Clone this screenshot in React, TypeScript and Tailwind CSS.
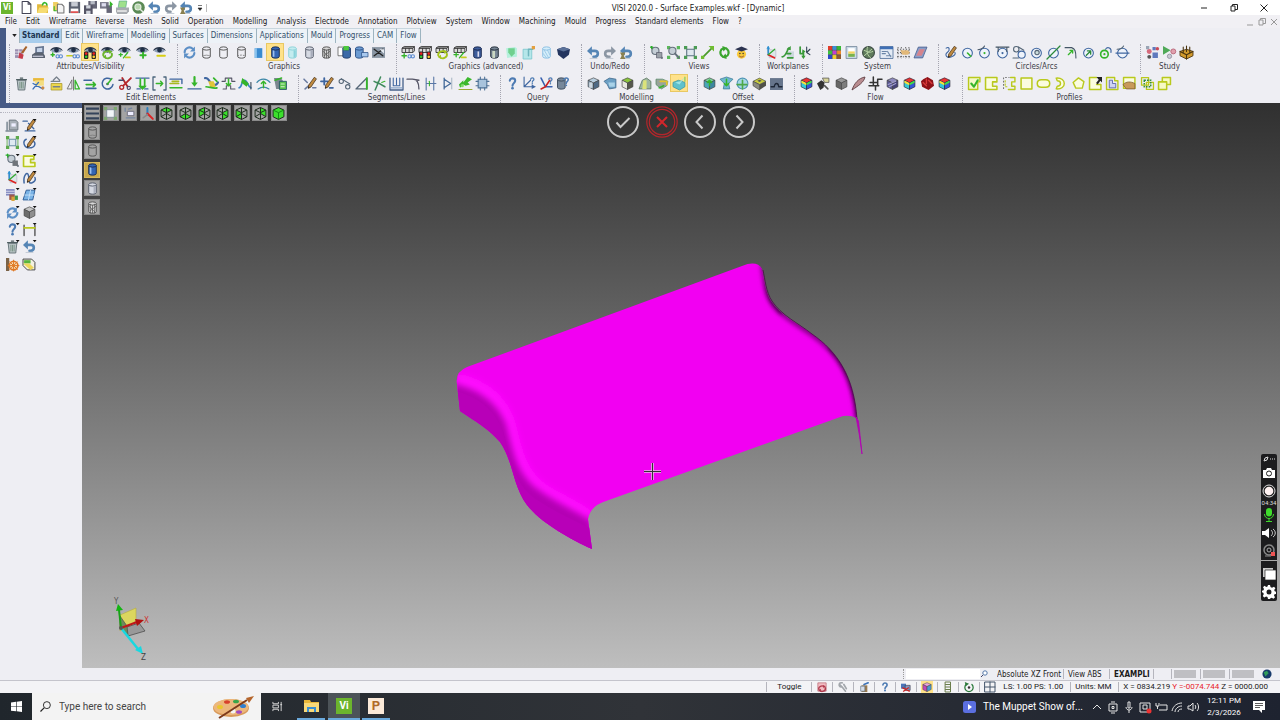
import { ReactNode } from "react";
import clsx from "clsx";

const BLUE = "#3f66a0";
const GREEN = "#35b52a";
const LIME = "#b9c91d";

// stroked path
const P = ({ d, c = BLUE, w = 1, f = "none" }: { d: string; c?: string; w?: number; f?: string }) => (
  <path d={d} stroke={c} strokeWidth={w} fill={f} strokeLinecap="round" strokeLinejoin="round" />
);

const Cyl = ({ f = "none", s = "#555", x = 0 }: { f?: string; s?: string; x?: number }) => (
  <g transform={`translate(${x} 0)`} stroke={s} fill={f} strokeWidth=".9">
    <path d="M2.5 2.3v7.4c0 2 7 2 7 0V2.3" />
    <ellipse cx="6" cy="2.3" rx="3.5" ry="1.5" />
  </g>
);

const Eye = () => (
  <>
    <path d="M0 4.500C1 .5 9 -1 12 4.500 9 2.800 3 2.800 0 4.500z" fill="#2f3b4d" />
    <path d="M1 4.500c2-3 8-3 10 0-2 2.200-8 2.200-10 0z" fill="#8c9db5" />
    <circle cx="6" cy="3.800" r="2.200" fill="#1e2e45" />
  </>
);

const Cubes = () => (
  <>
    <path d="M0 2l2-1.500h9.500L10 2zM0 2h10v4H0z" fill="#d9d9d9" stroke="#333" strokeWidth=".8" />
    <path d="M3.300 2v4M6.600 2v4M11.500.5v4L10 6" fill="none" stroke="#333" strokeWidth=".8" />
  </>
);

const Cube = ({ t, l, r, s = "#444" }: { t: string; l: string; r: string; s?: string }) => (
  <g stroke={s} strokeWidth=".6" strokeLinejoin="round">
    <path d="M6 .8l5 2.200-5 2.500-5-2.500z" fill={t} />
    <path d="M1 3l5 2.500v6L1 9z" fill={l} />
    <path d="M11 3L6 5.500v6L11 9z" fill={r} />
  </g>
);

const Pencil = ({ c = "#c08a3e" }: { c?: string }) => (
  <>
    <path d="M9.500 .3l2 1.400-5 7.500L4 10.500l.3-3z" fill={c} stroke="#4a3520" strokeWidth=".7" />
    <path d="M4 10.500l.2-1.500 1 .7z" fill="#111" />
  </>
);

const Drop = () => <path d="M9 0h3.500l-1.700 2z" fill="#111" />;

const Lights = () => (
  <>
    <rect x="0" y="5" width="4" height="7" rx="1" fill="#222" />
    <rect x="7" y="5" width="4" height="7" rx="1" fill="#222" />
    <circle cx="2" cy="7" r="1.200" fill="#e22" />
    <circle cx="9" cy="7" r="1.200" fill="#e22" />
    <circle cx="2" cy="10" r="1.200" fill="#3c3" />
    <circle cx="9" cy="10" r="1.200" fill="#fc3" />
  </>
);

const Rot = ({ c = "#6cb52d" }: { c?: string }) => (
  <>
    <P d="M2 8.500a4 3.500 0 0 1 6.500-3M10 7a4 3.500 0 0 1-7 3" c={c} w={1.700} />
    <path d="M7 3.500l3.500 1.500-2.500 2.500zM5 12L1.500 10 4.500 8z" fill={c} />
  </>
);

const Undo = ({ c = "#5585b5" }: { c?: string }) => (
  <>
    <P d="M3 4.500h4c4 0 4 5 0 5.500H6" c={c} w={2.400} />
    <path d="M0 4.500L4.500.3v8.400z" fill={c} />
    <ellipse cx="6" cy="11.500" rx="4" ry=".6" fill="#c5ccd6" />
  </>
);

const Lens = () => (
  <>
    <circle cx="5" cy="4.500" r="3.300" fill="#c5ced6" stroke="#65707c" />
    <P d="M7.500 7l3.500 4" c="#65707c" w={1.800} />
  </>
);

const Axes = () => (
  <>
    <path d="M2 3l8 1v6l-6 1z" fill="#dde6ea" stroke="#aab" strokeWidth=".5" />
    <P d="M3 8V1" c="#2d8fd0" w={1.500} />
    <P d="M3 8l6 3" c="#d22" w={1.500} />
    <P d="M3 8l6-5" c="#3a3" w={1.200} />
    <path d="M1.300 2.500L3 0l1.700 2.500z" fill="#2d8fd0" />
  </>
);

const Question = () => (
  <>
    <P d="M3.500 3.500c0-3 5-3 5 0C8.500 5.500 6 5.500 6 8" c="#4d7bb3" w={1.900} />
    <circle cx="6" cy="10.300" r="1.200" fill="#4d7bb3" />
  </>
);

const Chain = ({ x = 0, y = 0 }: { x?: number; y?: number }) => (
  <g transform={`translate(${x} ${y})`} fill="none" stroke="#5b8bd0">
    <circle cx="2" cy="2" r="1.500" />
    <circle cx="5" cy="2" r="1.500" />
  </g>
);

const Trash = () => (
  <>
    <path d="M2 3h8l-1 9H3z" fill="#b9c4c6" stroke="#5d6c70" strokeWidth=".8" />
    <path d="M1 2.500h10M4.500 1h3" stroke="#4f5e62" strokeWidth="1.200" />
    <path d="M4.500 4.500v6M6 4.500v6M7.500 4.500v6" stroke="#6c8a78" strokeWidth=".7" />
  </>
);

// cube outline with some faces lit; faces are given as path data
const WireCube = ({ lit, solid }: { lit: string; solid?: boolean }) => (
  <g stroke="#1c2a1c" strokeWidth=".9" strokeLinejoin="round" fill="none">
    <path d={lit} fill="#3be02c" stroke="none" />
    <path d="M6 .5l5 2.300v6.200l-5 2.500L1 9V2.800z" />
    <path d="M1 2.800l5 2.400 5-2.400M6 5.200v6.300" stroke={solid ? "#148a14" : "#1c2a1c"} />
    {!solid && <path d="M6 .5V6L1 9M6 6l5 3" />}
  </g>
);

const Rainbow = () => (
  <>
    <Cube t="#e33" l="#35c9d8" r="#3556d8" s="#223" />
    <path d="M1.300 3.300l4.500 2.200v2L1.300 5.300z" fill="#fd3" />
    <path d="M10.700 3.300L6.200 5.500v2l4.500-2.200z" fill="#4d4" />
  </>
);

const Ring = ({ children }: { children?: ReactNode }) => (
  <>
    <circle cx="6" cy="6.500" r="4.500" fill="#eef3fb" stroke={BLUE} />
    {children}
  </>
);

const icons: Record<string, ReactNode> = {
  new: <P d="M2 .5h5.500L10 3v8.500H2zM7.500.5V3H10" c="#445" f="#fff" />,
  open: (
    <>
      <path d="M1 3h4l1 1h5v7H1z" fill="#e2b93b" />
      <path d="M3 6h9l-2.500 5H1z" fill="#f6dc72" />
      <P d="M6 3.500c1-3 4-2 4 0" c={GREEN} w={1.600} />
    </>
  ),
  recent: (
    <>
      <path d="M1 1h4l1 1v7H1z" fill="#f0cf62" />
      <P d="M5 3h4l2 2v6H5z" c="#777" f="#f4f4f4" />
      <P d="M2 5v4h2" c={GREEN} />
    </>
  ),
  save: (
    <>
      <path d="M.8.8h10.400v10.400H.8z" fill="#5c6270" />
      <path d="M3 1h6v4H3z" fill="#c8ccd4" />
      <path d="M2.500 7h7v4h-7z" fill="#fff" />
      <path d="M2.500 9.500h7v1.500h-7z" fill="#d44" />
    </>
  ),
  saveall: (
    <>
      <path d="M4 0h8v7H4z" fill="#667" />
      <path d="M6 0h4v3H6z" fill="#b8bcc6" />
      <path d="M0 4h8v8H0z" fill="#556" />
      <path d="M2 4h4v3H2zM2 9h4v3H2z" fill="#d0d4dc" />
    </>
  ),
  export: (
    <>
      <path d="M0 1h8v6H0z" fill="#778" />
      <path d="M1.500 2h4v3h-4z" fill="#dde" />
      <path d="M6 4h5v7H6z" fill="#667" />
      <path d="M9 0l3 3-3 3z" fill={GREEN} />
    </>
  ),
  print: (
    <>
      <path d="M3 0h7L9 6H2z" fill="#9fe08b" stroke="#5a8" strokeWidth=".6" />
      <path d="M0 6h12v3.500L10 12H1L0 10z" fill="#a8abb0" />
      <path d="M1 8.500h9v1.500H1z" fill="#e8e8e8" />
    </>
  ),
  preview: (
    <>
      <circle cx="6" cy="6" r="5.800" fill="#5b8a56" />
      <circle cx="5.500" cy="5.500" r="2.800" fill="#b9d8b0" stroke="#e5eee2" />
      <P d="M8 8l2 2" c="#e5eee2" w={1.300} />
    </>
  ),
  undo: <Undo />,
  redo: (
    <g transform="matrix(-1 0 0 1 12 0)">
      <Undo c="#8b96a3" />
    </g>
  ),
  history: (
    <>
      <Undo />
      <path d="M0 6h5L3.500 9 5 12H0l1.500-3z" fill="#8a8050" />
    </>
  ),
  attributes: (
    <>
      <path d="M0 3h7v8H0z" fill="#9a8fb0" />
      <path d="M0 5.500h7M0 8h7M3.500 3v8" stroke="#fff" strokeWidth=".6" />
      <path d="M10 0l1.500 1-4 6-2-1z" fill="#a5622c" />
      <path d="M4 6l4 2-1 4-4-1z" fill="#c63b4a" />
    </>
  ),
  layers: (
    <>
      <path d="M3 1l8-1v7H3z" fill="#62718c" />
      <path d="M4.500 2l5-.5v4h-5z" fill="#c5d3e8" />
      <path d="M0 8l3-2h7l2 3v2H0z" fill="#5a6270" />
      <P d="M1 9.500h9" c="#dde" />
    </>
  ),
  eyelink: (
    <>
      <Eye />
      <P d="M1 8h3M2.500 6.500v3" c={GREEN} w={1.400} />
      <Chain x={5} y={7.500} />
    </>
  ),
  eyeunlink: (
    <>
      <Eye />
      <P d="M0 9h5" c="#c6cc20" w={1.600} />
      <Chain x={5} y={7.500} />
    </>
  ),
  eyelights: (
    <>
      <Eye />
      <Lights />
    </>
  ),
  eyerefresh: (
    <>
      <Eye />
      <Rot />
    </>
  ),
  eyetoggle: (
    <>
      <Eye />
      <P d="M1 8h3M2.500 6.500v3M5 11l4-5" c={GREEN} w={1.200} />
      <P d="M7 10.500h4" c="#c6cc20" w={1.600} />
    </>
  ),
  eyeplus: (
    <>
      <Eye />
      <P d="M4 8.500h5M6.500 6v5" c={GREEN} w={1.700} />
    </>
  ),
  eyeminus: (
    <>
      <Eye />
      <P d="M4 9h7" c="#d8ce15" w={1.800} />
    </>
  ),
  refresh: (
    <>
      <P d="M1.500 6a4.500 4.500 0 0 1 7.500-3.500M10.500 6.500a4.500 4.500 0 0 1-7.500 3" c="#5c8fc6" w={1.900} />
      <path d="M11 .5V5H6.500zM1 11.500V7h4.500z" fill="#5c8fc6" />
    </>
  ),
  cylwire: (
    <>
      <Cyl />
      <P d="M2.500 9.500c1-1.500 6-1.500 7 0" c="#777" w={0.7} />
    </>
  ),
  cylplain: <Cyl />,
  cyldash: (
    <>
      <Cyl />
      <path d="M2.500 9.500c1-1.500 6-1.500 7 0" fill="none" stroke="#777" strokeWidth=".8" strokeDasharray="1.500 1" />
    </>
  ),
  cylflat: (
    <>
      <path d="M2.500 2h7v9h-7z" fill="#3a8bd0" />
      <path d="M2.500 2h2v9h-2z" fill="#8cc4ee" />
    </>
  ),
  cylblue: (
    <>
      <Cyl f="#3566b5" s="#1c2f55" />
      <path d="M3.500 4v6h1.500V4.300z" fill="#9dc0ef" />
    </>
  ),
  cylcyan: (
    <>
      <Cyl f="#c3ecef" s="#8fd3da" />
      <path d="M7 4v7l2-1V4z" fill="#89d2da" />
    </>
  ),
  cylgrey: (
    <>
      <Cyl f="#d5d9e2" s="#575e6c" />
      <path d="M7 4v6.500l2-1V4z" fill="#a8adbb" />
    </>
  ),
  cylhatch: (
    <>
      <Cyl f="#d8d8d8" />
      <P d="M4 3v8M6 4v7M8 3v8M3 5l5 5M9 5L4 9" c="#555" w={0.7} />
    </>
  ),
  cylgreen: (
    <>
      <path d="M0 1h5v8H0z" fill="#fff" stroke="#555" strokeWidth=".7" />
      <Cyl f="#3c6aa8" s="#24406e" x={2} />
      <path d="M5 0h5v4H5z" fill="#4cc93d" />
    </>
  ),
  cylbox: (
    <>
      <Cyl f="#6c9bd2" s="#2d5288" x={-2} />
      <path d="M6 6h6v4H6z" fill="#a8c8ee" stroke="#2d5288" strokeWidth=".7" />
    </>
  ),
  shade: (
    <>
      <path d="M0 1h12v10H0z" fill="#8995a3" />
      <P d="M2 3l8 6M10 3L2 9" c="#222" w={1.200} />
      <path d="M7 3h4v4z" fill="#e8eef5" />
    </>
  ),
  cubelink: (
    <>
      <Cubes />
      <P d="M0 9h4M2 7v4" c={GREEN} w={1.300} />
      <Chain x={5} y={7.500} />
    </>
  ),
  cubelights: (
    <>
      <Cubes />
      <Lights />
    </>
  ),
  cuberefresh: (
    <>
      <Cubes />
      <Rot c="#a3c41c" />
    </>
  ),
  cubetoggle: (
    <>
      <Cubes />
      <P d="M0 8h4M2 6v4M5 11l4-5" c={GREEN} w={1.200} />
      <P d="M7 10.500h4" c="#c6cc20" w={1.600} />
    </>
  ),
  cylnavy: (
    <>
      <Cyl f="#3f5e9c" s="#1b2a50" />
      <path d="M6 5h1.500v5H6z" fill="#dde" />
    </>
  ),
  cyldark: (
    <>
      <Cyl f="#778594" s="#25303d" />
      <path d="M4 4.500h2.500V11H4z" fill="#ccd9c4" />
    </>
  ),
  boxgreen: (
    <>
      <path d="M1 2l8-1 2 1v8l-9 1z" fill="#b5f0dc" />
      <path d="M3 2h6v5l-3 3-3-4z" fill="#6fd08e" />
    </>
  ),
  boxcyan: (
    <>
      <path d="M1 3h8v9H1z" fill="#b5e6e9" stroke="#73c4cb" strokeWidth=".7" />
      <P d="M6 9V3h4" c="#6fb5bd" w={1.400} />
      <path d="M9 0h3v3H9z" fill="#e3a040" />
    </>
  ),
  cylpale: (
    <>
      <Cyl f="#d5eefa" s="#8dbfe2" />
      <P d="M4 4l4 7M7 4l2 4M3 7l3 4" c="#8dbfe2" w={0.7} />
    </>
  ),
  shield: (
    <>
      <path d="M0 3l6-2 6 2-1 5-5 4-5-4z" fill="#24355f" />
      <path d="M0 3l6-2 6 2-6 2z" fill="#5b7199" />
    </>
  ),
  zoomcube: (
    <>
      <Lens />
      <path d="M0 1h3M1.500 0v3" stroke="#2a2" />
      <path d="M6 6h5v5H6z" fill="#9ba1a8" stroke="#556" strokeWidth=".6" />
    </>
  ),
  zoombox: (
    <>
      <path d="M0 0h3v3H0zM9 0h3v3H9zM0 9h3v3H0zM9 9h3v3H9z" fill="#5cb85c" />
      <Lens />
    </>
  ),
  fit: (
    <>
      <path d="M2.500 3h7v6h-7z" fill="#dfe8ef" stroke="#5c7383" />
      <path d="M0 0h3v3H0zM9 0h3v3H9zM0 9h3v3H0zM9 9h3v3H9z" fill="#4b9b55" />
    </>
  ),
  line: (
    <>
      <P d="M2 10l8-8" c="#4a9a2c" w={1.600} />
      <path d="M7 0h5v5zM0 9h3v3H0z" fill="#6fbd30" />
    </>
  ),
  rotate: (
    <>
      <P d="M4 9.500C1 7 2 3 5 2M8 2.500c3 2.500 2 6.500-1 7.500" c="#3aa52e" w={2} />
      <path d="M4 0l4.500 1.500L5 5zM8 12l-4.500-1.500L7 7z" fill="#3aa52e" />
    </>
  ),
  graduate: (
    <>
      <circle cx="6" cy="7.500" r="4.200" fill="#f8c93a" />
      <path d="M0 3l6-2.500L12 3 6 5z" fill="#2c3350" />
      <circle cx="4.500" cy="7" r=".7" fill="#333" />
      <circle cx="7.500" cy="7" r=".7" fill="#333" />
      <P d="M4 9.300c1 1.200 3 1.200 4 0" c="#843" w={0.8} />
    </>
  ),
  axes: <Axes />,
  axesnew: (
    <>
      <path d="M6 5h6v6H6z" fill="#ccd8dd" />
      <P d="M1 10c3 0 4-4 6-8M5 7h4M6 11h5" c="#3a9a3a" w={1.500} />
      <path d="M5 3l4-3v4z" fill="#3a9a3a" />
    </>
  ),
  axesmove: (
    <>
      <P d="M2 1v6h3M5 5v5" c="#3a9a3a" w={1.600} />
      <path d="M4 3l3 2-3 2zM3 9h4l-2 3z" fill="#3a9a3a" />
      <P d="M8 1v5l3-3M8 6l3 2" c="#345" />
    </>
  ),
  colors: (
    <>
      <path d="M0 0h4v4H0z" fill="#e23c2a" />
      <path d="M4 0h4v4H4z" fill="#3a8fd8" />
      <path d="M8 0h4v4H8z" fill="#38b836" />
      <path d="M0 4h4v4H0z" fill="#3cc43c" />
      <path d="M4 4h4v4H4z" fill="#c33cd2" />
      <path d="M8 4h4v4H8z" fill="#ee8a28" />
      <path d="M0 8h4v4H0z" fill="#2b49c8" />
      <path d="M4 8h4v4H4z" fill="#f1cf2a" />
      <path d="M8 8h4v4H8z" fill="#8c5a32" />
      <path d="M0 4h12M0 8h12M4 0v12M8 0v12" stroke="#444" strokeWidth=".5" />
    </>
  ),
  page: (
    <>
      <path d="M1 .5h10v11H1z" fill="#ccdbe8" stroke="#6d7f92" strokeWidth=".7" />
      <path d="M3 2h6v5H3z" fill="#fff" />
      <path d="M3 7h6v3H3z" fill="#79b34d" />
      <path d="M3 5h6v2H3z" fill="#f5d460" />
    </>
  ),
  globe: (
    <>
      <circle cx="6" cy="6" r="5.500" fill="#5f7a5c" stroke="#3d4b45" />
      <P d="M2 4c3 1 4 3 8 1M5 1c-1 4 0 8 3 10M2 9l7-6" c="#b7d3a6" w={0.9} />
    </>
  ),
  dialog: (
    <>
      <path d="M0 .5h12v11H0z" fill="#e4ebf5" stroke="#56749c" strokeWidth=".8" />
      <path d="M0 .5h12V3H0z" fill="#3f6fb5" />
      <P d="M2 5h4M2 7h3M7 5l3 5M6 9h4" c="#6c86a8" />
    </>
  ),
  snap: (
    <>
      <path d="M1 1v11M4 1v11M8 1v11M11 1v11M0 3h12M0 6h12M0 10h12" stroke="#444" strokeWidth=".8" strokeDasharray="1.200 1.500" />
      <path d="M3 4h7l2 2-2 2H5z" fill="#e2b878" />
    </>
  ),
  plane: (
    <>
      <path d="M4 1h8L8 11H0z" fill="#8a9ec8" stroke="#44598a" strokeWidth=".7" />
      <path d="M5 3h5L7 9H2z" fill="#d6848d" />
    </>
  ),
  arcpencil: (
    <>
      <P d="M2 2c3-2 4 2 1 4-3 2 0 6 4 4 3-1 4-3 3-4" />
      <Pencil />
    </>
  ),
  circle1: (
    <Ring>
      <P d="M6 6.500l3 3" c={GREEN} w={1.500} />
    </Ring>
  ),
  circle2: (
    <Ring>
      <P d="M0 3.500C3 3 5 2 6 0" c="#456" />
      <circle cx="6" cy="6.500" r="1" fill={GREEN} />
    </Ring>
  ),
  circle3: (
    <Ring>
      <P d="M0 1h12M2 1v4M10 1v4" c="#456" />
      <circle cx="6" cy="6.500" r="1" fill={BLUE} />
    </Ring>
  ),
  circle4: (
    <>
      <circle cx="3" cy="3" r="2.500" fill="none" stroke="#567" />
      <circle cx="8" cy="8" r="3.300" fill="#eef3fb" stroke={BLUE} />
      <P d="M0 11h5M5 1l5 3" c="#567" />
    </>
  ),
  circle5: (
    <Ring>
      <circle cx="6.500" cy="6" r="2" fill="#cdd" stroke="#567" />
    </Ring>
  ),
  circle6: (
    <Ring>
      <P d="M0 12L12 0" c="#2c8a3a" w={1.200} />
    </Ring>
  ),
  arc: (
    <>
      <P d="M1 1.500h6c3 1 4 3 4 9.500" c="#456" />
      <P d="M4 8l4-4M5.500 4H8v2.500" c={GREEN} w={1.200} />
    </>
  ),
  circle7: (
    <Ring>
      <P d="M4 8.500l3.500-3.500M5 4.500h3v3" c="#2c8a3a" w={1.200} />
    </Ring>
  ),
  circle8: (
    <>
      <circle cx="5" cy="7.500" r="3.500" fill="none" stroke={GREEN} strokeWidth="1.500" />
      <circle cx="5" cy="7.500" r="1" fill={GREEN} />
      <P d="M6 3c2-3 6-1 5 3" />
    </>
  ),
  circle9: (
    <Ring>
      <P d="M0 6.500h12" c={BLUE} w={1.200} />
      <P d="M1 3c3 0 5-1 6-3" c="#567" />
    </Ring>
  ),
  study1: (
    <>
      <circle cx="3" cy="5" r="2.300" fill="#d66a7c" />
      <circle cx="3" cy="10" r="1.800" fill="#555" />
      <path d="M6 1h3v3H6zM6 6h5v5H6z" fill="#5f79bd" />
      <circle cx="10.500" cy="2.500" r="1.600" fill="#c94a58" />
      <path d="M0 0h3v3H0z" fill="#9aa5b5" />
    </>
  ),
  study2: (
    <>
      <path d="M0 0l7 4-7 4z" fill="#4fa958" />
      <circle cx="9.500" cy="5" r="2.300" fill="#e0a0ae" stroke="#b0566a" strokeWidth=".7" />
      <circle cx="6" cy="9.500" r="2" fill="#c9c9d2" stroke="#889" strokeWidth=".7" />
    </>
  ),
  study3: (
    <>
      <path d="M0 5l6-2 6 2v4l-6 3-6-3z" fill="#d19a2c" stroke="#4a3410" strokeWidth=".8" />
      <P d="M0 5l6 3 6-3M6 8v4M3 1v5M6 0v5M9 1v5" c="#4a3410" />
    </>
  ),
  trash: <Trash />,
  editcut: (
    <>
      <path d="M1 1h10v3H1z" fill="#e9b93b" />
      <path d="M3 3h8v5H3z" fill="#f4dd80" />
      <P d="M1 11l5-6M1 6l9 5" c="#3a70b8" w={1.300} />
      <circle cx="10" cy="10" r="1.500" fill="#c84" />
    </>
  ),
  stack: (
    <>
      <path d="M1 6h10v6H1z" fill="#ebd64c" stroke="#a99726" strokeWidth=".7" />
      <P d="M3 9h6M3 3l3-3 3 3M1 4h8" c="#78818c" w={1.200} />
    </>
  ),
  mirror: (
    <>
      <P d="M4.500 3v8H.5zM6 0v12" c="#777" w={0.9} />
      <P d="M7.500 3v8h4z" c={GREEN} w={1.200} />
    </>
  ),
  moveline: (
    <>
      <P d="M0 3h7M2 10.500h9" w={1.400} />
      <P d="M2 7h8M8.500 5l2 2-2 2" c={GREEN} w={1.500} />
    </>
  ),
  spin: (
    <>
      <P d="M9 2a5 5 0 1 0 2 5" w={1.400} />
      <circle cx="6" cy="6.500" r="1.200" fill="#456" />
      <P d="M6 6.500l4-5" c={GREEN} w={1.400} />
    </>
  ),
  cut: (
    <>
      <P d="M3 1l5 8M11 1L4 8" c="#b5272b" w={1.700} />
      <circle cx="2.500" cy="9.500" r="1.800" fill="none" stroke="#b5272b" strokeWidth="1.200" />
      <circle cx="9" cy="10" r="1.500" fill="none" stroke="#446" />
      <P d="M0 3h4" c="#446" w={1.300} />
    </>
  ),
  trim: (
    <>
      <P d="M0 1h12M1 11h3M8 11h3" w={1.300} />
      <P d="M4 2v7M8 2v7" c={GREEN} w={1.600} />
      <path d="M2 8h8L6 12z" fill={GREEN} />
    </>
  ),
  between: (
    <>
      <P d="M2 0H0v12h2M10 0h2v12h-2" c="#4b657c" w={1.200} />
      <P d="M3 6h6M7 4l2 2-2 2" c={GREEN} w={1.300} />
    </>
  ),
  offset: (
    <>
      <P d="M0 2h11v4" c={BLUE} w={1.300} />
      <P d="M0 6h8M2 4h6" c="#a8b820" w={1.500} />
      <P d="M0 10h11" c={GREEN} w={1.400} />
    </>
  ),
  drop: (
    <>
      <P d="M6 0v6" c={GREEN} w={2} />
      <path d="M3 5h6L6 9z" fill={GREEN} />
      <P d="M0 11h12" w={1.300} />
    </>
  ),
  swap: (
    <>
      <P d="M0 1c4-1 4 5 7 6s4 0 5-2" c={BLUE} w={2} />
      <path d="M3 4h5l2 5-5 1z" fill="#e0c63a" />
      <P d="M1 9c3 0 7 2 10 1M8 1l3 3" c={GREEN} w={1.600} />
    </>
  ),
  lift: (
    <>
      <P d="M0 4h3V1h6v3h3M1 11h3V8h4v3h4" c="#556" />
      <P d="M6 2v6M4 6l2 2 2-2" c={GREEN} w={1.400} />
    </>
  ),
  twist: (
    <>
      <P d="M0 10c3 0 2-7 5-7s3 6 6 7" c="#3a83c5" w={1.500} />
      <path d="M3 1l6 5-2 3-5-4z" fill={GREEN} />
      <P d="M11 5v6" c="#345" />
    </>
  ),
  bend: (
    <>
      <P d="M0 5c3-4 9-4 12 0M1 11c3-2 7-2 10 0" c="#3e88a8" w={1.200} />
      <P d="M6 10V4M4 6l2-2 2 2" c={GREEN} w={1.300} />
    </>
  ),
  paste: (
    <>
      <path d="M0 1h6l2 2v8H2z" fill="#7b8790" />
      <path d="M5 4h6.500v7.500H5z" fill="#59c24e" stroke="#256" strokeWidth=".8" />
      <P d="M6.500 6.500h3M6.500 9h3" c="#d5f5cc" />
      <P d="M1 3l6-2" c={GREEN} w={1.400} />
    </>
  ),
  segpencil: (
    <>
      <P d="M0 2l3 3M1 11l9-8M8 10h3" c="#6a7ba0" w={1.400} />
      <Pencil />
    </>
  ),
  segplus: (
    <>
      <P d="M0 4h6M3 1v6M8 10h3" w={1.700} />
      <Pencil />
    </>
  ),
  segtan: (
    <>
      <circle cx="3" cy="4" r="2" fill="none" stroke="#567" />
      <circle cx="9" cy="9" r="2" fill="none" stroke="#567" />
      <P d="M3 1.500l8 5" c="#567" />
    </>
  ),
  segtri: (
    <>
      <P d="M0 11L10 1v10z" c="#567" w={1.200} />
      <P d="M10 1v10" c={GREEN} w={1.700} />
    </>
  ),
  segangle: (
    <>
      <P d="M2 12L7 0M4 5l7 4M1 4l4 2" c="#3f8a5c" w={1.400} />
      <P d="M8 5l3-1" c={GREEN} />
    </>
  ),
  segu: (
    <>
      <P d="M0 1v11h12V1" c="#44608a" w={1.200} />
      <P d="M3 1v7h6V1M6 1v6" c={BLUE} />
      <P d="M1 10h10" c="#8aa6cc" />
    </>
  ),
  segfillet: <P d="M0 2h5c4 0 6 3 6 9M5 2l6 1" c="#556" w={1.200} />,
  segcross: (
    <>
      <P d="M2 1v11M9 0v12M2 6h9" c="#5876a5" />
      <P d="M5 4v4" c={GREEN} />
    </>
  ),
  segplay: (
    <>
      <P d="M2 1v10M2 2l6 4-6 4" c="#446a9a" w={1.200} />
      <P d="M9 1v10" c="#9ab" w={0.8} />
    </>
  ),
  seggreen: (
    <>
      <path d="M0 7l4-4v2l4-5 4 2-4 3 2 2-4 1-2-1-3 3z" fill="#3ab82c" />
      <circle cx="3" cy="8" r="1.500" fill="#7cdc6a" />
      <P d="M0 11.500h12" c="#9a3" />
    </>
  ),
  segbox: (
    <>
      <path d="M2 2h8v8H2z" fill="#a8c3dc" stroke="#4f7296" />
      <P d="M0 4h2M0 8h2M10 4h2M10 8h2M4 0v2M8 0v2M4 10v2M8 10v2" c="#4f7296" />
    </>
  ),
  question: <Question />,
  queryaxis: (
    <>
      <P d="M1 0v9h8M1 9l6-6" />
      <g transform="translate(5 0) scale(.6)">
        <Question />
      </g>
      <path d="M8 7l4 2-4 2z" fill={BLUE} />
    </>
  ),
  queryred: (
    <>
      <P d="M1 1l4 8h6" c="#3a62b0" w={1.500} />
      <P d="M5 9L1 11M5 9l4-6" c="#c22" w={1.500} />
      <g transform="translate(6 0) scale(.6)">
        <Question />
      </g>
    </>
  ),
  querysolid: (
    <>
      <Cyl f="#77889a" s="#3d4c5c" x={-2} />
      <g transform="translate(4 0) scale(.75)">
        <Question />
      </g>
    </>
  ),
  solid1: (
    <>
      <Cube t="#b9cfe0" l="#7f98ad" r="#4f6a85" />
      <path d="M2 5h3v5H2z" fill="#cfd8e0" />
    </>
  ),
  solid2: (
    <>
      <path d="M0 4l5-3 6 1v8l-6 1-2-4z" fill="#6b9fc4" stroke="#3a6488" strokeWidth=".7" />
      <path d="M4 5h6v4H5z" fill="#a9d2e8" />
    </>
  ),
  solid3: <Cube t="#8bc63c" l="#e8e8e0" r="#55584c" />,
  solid4: (
    <>
      <path d="M0 11l3-8 4-2 4 3v7z" fill="#9fb7a0" stroke="#54705a" strokeWidth=".7" />
      <path d="M4 3h3v8H3z" fill="#dbe37a" />
    </>
  ),
  solid5: (
    <>
      <path d="M0 2h6l5 2-1 4-5 3-5-4z" fill="#99a49a" stroke="#586" strokeWidth=".7" />
      <P d="M4 4h6v3" c="#e2c42e" w={1.600} />
      <P d="M3 10l4-2" c={GREEN} w={1.500} />
    </>
  ),
  dynamic: (
    <>
      <path d="M0 5l5-2 6 2v4l-5 3-6-3z" fill="#5fc1cb" stroke="#3a96a5" strokeWidth=".7" />
      <path d="M2 5l4 2 5-7-4 4z" fill="#9be4e6" />
      <P d="M11 0v4" c="#7c5" />
    </>
  ),
  off1: (
    <>
      <Cube t="#7fd0a0" l="#4aa6b8" r="#3d86a0" />
      <P d="M6 8V3M4 5l2-2 2 2" c={GREEN} w={1.400} />
    </>
  ),
  off2: (
    <>
      <path d="M0 2l6-2 6 2-4 4 1 5H3l1-5z" fill="#6fb8d0" stroke="#3a7a98" strokeWidth=".7" />
      <P d="M6 2v6M4 6l2 2 2-2" c={GREEN} w={1.400} />
    </>
  ),
  off3: (
    <>
      <circle cx="6" cy="6" r="5" fill="#a5d8e6" stroke="#4f94b5" />
      <P d="M1 7h9M6 3v8" c="#4ea84a" w={1.500} />
    </>
  ),
  off4: (
    <>
      <path d="M0 4l6-3 6 3-6 3z" fill="#c8cc40" stroke="#444" strokeWidth=".6" />
      <path d="M0 4l6 3v5L0 8z" fill="#8c8c80" stroke="#444" strokeWidth=".6" />
      <path d="M12 4L6 7v5l6-4z" fill="#505048" />
      <path d="M4 3.500L6 2.500l2 1-2 1z" fill="#555" />
    </>
  ),
  off5: (
    <>
      <path d="M0 1h12v11H0z" fill="#66758c" />
      <P d="M1 9h3c0-4 4-4 4 0h3" c="#1e2838" w={1.200} />
    </>
  ),
  rainbow: <Rainbow />,
  paint: (
    <>
      <path d="M0 6l4-3 3 2-1 5-3 2z" fill="#333" />
      <path d="M5 1h6v4H7z" fill="#d8d49a" stroke="#555" strokeWidth=".7" />
      <P d="M7 8l3 3" c="#555" w={1.500} />
    </>
  ),
  cubegrey: <Cube t="#999" l="#666" r="#7d7d7d" />,
  blade: <path d="M0 12C2 6 6 1 12 0 11 5 6 8 0 12z" fill="#b98c90" stroke="#5e3d42" strokeWidth=".8" />,
  nodes: <P d="M4 0v8h5M1 5h7V2h4M6 8v4M0 8h3M8 5v3" c="#333" w={1.400} />,
  cubepurple: (
    <>
      <Cube t="#8e8abf" l="#5a5894" r="#454278" />
      <P d="M2 7l7-3M3 9l6-3" c="#a5a2d0" />
    </>
  ),
  redball: (
    <>
      <path d="M2 2l4-2 5 3 1 5-5 4-6-3-1-5z" fill="#8e1218" />
      <P d="M2 5l3 3M7 3l3 3M5 2v4" c="#d83a3a" w={1.300} />
    </>
  ),
  profok: (
    <>
      <P d="M.5.5H11v4H9v7H.5z" c={LIME} w={1.300} f="#f4f8c8" />
      <P d="M3 6l2.500 3L9 3" c={GREEN} w={1.900} />
    </>
  ),
  prof1: <P d="M.5.5H11v4H7v4h4v3H.5z" c={LIME} w={1.400} f="#fbfcdf" />,
  prof2: (
    <>
      <P d="M7 .5h4v4H8v4h3v3H5" c={LIME} w={1.300} />
      <path d="M.5 11V.5H6" fill="none" stroke="#777" strokeDasharray="1.500 1.500" />
      <path d="M2 3v6h3" fill="none" stroke={LIME} strokeDasharray="2 1" />
    </>
  ),
  rect: <P d="M1 1h10v10H1z" c={LIME} w={1.400} f="#fbfcdf" />,
  ellipse: <P d="M4 2.500h4c5 0 5 7 0 7H4c-5 0-5-7 0-7z" c={LIME} w={1.400} f="#fbfcdf" />,
  crescent: <P d="M2 1c10-1 10 11 0 10l1-2.500c4 0 4-5 0-5z" c={LIME} w={1.300} f="#fbfcdf" />,
  polygon: <P d="M6 .8l5 3.500-1.500 6h-6L1 5z" c={LIME} w={1.300} f="#fbfcdf" />,
  profarrow: (
    <>
      <P d="M7 .5H.5v11H11V7H7" c={LIME} w={1.400} f="#fbfcdf" />
      <path d="M7 0h5v5L10.500 3.500 8 7 6.500 5.500 9 2.500z" fill="#222" />
    </>
  ),
  proffill: (
    <>
      <P d="M.5.5H8v3h3v8H.5z" c={LIME} w={1.300} />
      <path d="M3 3h3v3h3v4H3z" fill="#cfd4f2" stroke="#5560a8" strokeWidth=".8" />
    </>
  ),
  profhand: (
    <>
      <P d="M.5.5H11v10H.5z" c={LIME} w={1.300} f="#fbfcdf" />
      <path d="M0 7c3-3 7-3 11-1v5H3z" fill="#c89a5a" stroke="#7a5a28" strokeWidth=".7" />
    </>
  ),
  profgrid: (
    <>
      <P d="M.5.5H7v7H.5zM5 5h6.500v6.500H5z" c={LIME} w={1.200} />
      <path d="M3 3h6v6H3z" fill="none" stroke="#2a8a3a" strokeWidth="1.300" strokeDasharray="1.500 1" />
    </>
  ),
  profunion: <P d="M4 .5h7.500V7H8v4.500H.5V4.500H4zM4 4.500h4V7" c={LIME} w={1.400} f="#f6f9c4" />,
  camera: (
    <>
      <path d="M3 1h6l2 2v7H3z" fill="#a9b0b8" stroke="#5b646e" strokeWidth=".7" />
      <path d="M5 4h4v3H5z" fill="#eef" />
      <P d="M0 11h10M1 3v7" c="#7b8894" w={1.400} />
    </>
  ),
  fitview: (
    <>
      <path d="M3 3h6v6H3z" fill="#dfeaf2" stroke="#6b90a5" />
      <path d="M0 0h3v3H0zM9 0h3v3H9zM0 9h3v3H0zM9 9h3v3H9z" fill="#5da94c" />
      <P d="M1 3v6M11 3v6" c="#5da94c" w={0.8} />
    </>
  ),
  zoomd: (
    <>
      <Lens />
      <path d="M6 6h5v5H6z" fill="#6f747a" />
      <P d="M0 1h3M1.500 0v3" c="#2a2" />
      <Drop />
    </>
  ),
  segd: (
    <>
      <P d="M0 2h4M5 4l5 5M2 11h9" w={1.200} />
      <Pencil />
      <Drop />
    </>
  ),
  arcd: (
    <>
      <P d="M3 3c-4 2-2 8 3 8s6-4 4-6" w={1.300} />
      <Pencil />
      <Drop />
    </>
  ),
  profd: (
    <>
      <P d="M.5 2H10v3H7v3h4v3.500H.5z" c={LIME} w={1.500} f="#fbfcdf" />
      <Drop />
    </>
  ),
  axesd: (
    <>
      <Axes />
      <Drop />
    </>
  ),
  curved: (
    <>
      <P d="M1 11C0 4 4 0 5 4s0 8 3 7 4-3 3-5" w={1.400} />
      <Pencil />
      <Drop />
    </>
  ),
  attrd: (
    <>
      <path d="M0 1h8v6H0z" fill="#8288c0" />
      <path d="M0 3h8M0 5h8" stroke="#fff" strokeWidth=".6" />
      <path d="M3 6h5v5H3z" fill="#a05a4a" />
      <path d="M8 7h3v4H8z" fill="#3a9a4a" />
      <path d="M5 8h3v4H5z" fill="#d8a23a" />
      <Drop />
    </>
  ),
  surfd: (
    <>
      <path d="M3 2h8L9 11H0z" fill="#79b3e6" stroke="#2f5f98" strokeWidth=".9" />
      <P d="M7 2L5 11M1.500 6.500H10" c="#c8e2f8" w={0.8} />
      <Drop />
    </>
  ),
  refreshd: (
    <>
      <P d="M1.500 6a4.500 4.500 0 0 1 7-3M10.500 6.500a4.500 4.500 0 0 1-7.500 3" c="#5c8fc6" w={2} />
      <path d="M1 12V7h4.500zM10 1v5H5.500z" fill="#5c8fc6" />
      <Drop />
    </>
  ),
  cubed: (
    <>
      <Cube t="#c5c5c5" l="#6e6e6e" r="#8f8f8f" />
      <Drop />
    </>
  ),
  questiond: (
    <>
      <Question />
      <Drop />
    </>
  ),
  dimd: (
    <>
      <P d="M1 2v9.500M11 2v9.500" c="#555" w={1.300} />
      <P d="M1 4.500h10" c={LIME} w={1.600} />
      <Drop />
    </>
  ),
  trashd: (
    <>
      <Trash />
      <Drop />
    </>
  ),
  undod: (
    <>
      <Undo />
      <Drop />
    </>
  ),
  cam: (
    <>
      <path d="M0 0h3v12H0z" fill="#7b6348" />
      <circle cx="7" cy="7" r="4" fill="#f6dcb5" stroke="#df7722" strokeWidth="1.500" />
      <P d="M7 2v10M2 7h10M3.500 3.500l7 7M10.500 3.500l-7 7" c="#df7722" w={0.9} />
    </>
  ),
  image: (
    <>
      <path d="M0 1h8l3 3v7H4L0 7z" fill="#f2f1e0" stroke="#444" strokeWidth=".9" />
      <path d="M1 2h6v3H1z" fill="#58b53c" />
      <path d="M0 5h6l4 4-3 2z" fill="#edd65a" />
    </>
  ),
  menu: <path d="M0 1.500h12M0 6h12M0 10.500h12" stroke="#34435a" strokeWidth="2" />,
  fitgrey: (
    <>
      <path d="M0 0h3v3H0zM9 0h3v3H9zM0 9h3v3H0zM9 9h3v3H9z" fill="#7ca86e" />
      <path d="M2.500 2.500h7v7h-7z" fill="#f2f5f8" stroke="#76868f" strokeWidth=".7" />
    </>
  ),
  snapshot: (
    <>
      <path d="M4 4h6v4H4z" fill="#eef" stroke="#667" strokeWidth=".8" />
      <P d="M3 10h8M2 1v3M5 2l3-1" c="#7485a0" w={1.200} />
    </>
  ),
  axisred: (
    <>
      <P d="M5 7V1" c="#2b80c0" w={1.800} />
      <P d="M5 6l5 5" c="#d22" w={1.800} />
      <P d="M5 7l-4 3" c="#888" w={1.300} />
    </>
  ),
  viewtop: <WireCube lit="M6 .5l5 2.300-5 2.400-5-2.400z" />,
  viewfront: <WireCube lit="M1 9l5-3 5 3-5 2.500z" />,
  viewleft: <WireCube lit="M1 2.800L6 .5V6L1 9z" />,
  viewright: <WireCube lit="M11 2.800L6 5.200v6.300L11 9z" />,
  viewback: <WireCube lit="M1 2.800l5 2.400v6.300L1 9z" />,
  viewbottom: <WireCube lit="M6 .5l5 2.300V9L6 6z" />,
  viewiso: <WireCube lit="M6 .5l5 2.300v6.200l-5 2.500L1 9V2.800z" solid />,
  plug: (
    <>
      <path d="M1 1h10v10H1z" fill="#f2bcc3" stroke="#b5606c" strokeWidth=".8" />
      <Rot c="#b03a4c" />
    </>
  ),
  wrench: <P d="M2 3l3 3 4 5M5 1C1 0 0 5 4 6M7 3l3 5" c="#a2a6ab" w={2} />,
  attach: (
    <>
      <path d="M3 4h7v8H3z" fill="#9a7b50" />
      <path d="M2 5h5v6H2z" fill="#d5dde8" stroke="#567" strokeWidth=".7" />
      <P d="M6 3l5-2" c="#3c72b8" w={2} />
    </>
  ),
  filter: (
    <>
      <path d="M0 2h6v6H0z" fill="#4a74b8" />
      <path d="M5 4h6v6H5z" fill="#8296c0" stroke="#334" strokeWidth=".7" />
      <P d="M2 7l8 4M9 7l-6 4" c="#c22" w={1.500} />
    </>
  ),
  cubepink: <Cube t="#e8a3dc" l="#c348b8" r="#4a9ad0" />,
  ladder: <P d="M3 0h6v12H3zM3 3h6M3 6h6M3 9h6" c="#6a7c4c" w={1.200} />,
  gyro: (
    <>
      <P d="M2.500 3a5 5 0 1 0 7 0" c="#2a7a3a" w={1.500} />
      <path d="M1 0l5 2-4 3z" fill="#2a7a3a" />
      <circle cx="6" cy="6.500" r="1.500" fill="#333" />
    </>
  ),
  grid: <P d="M0 0h12v12H0zM6 0v12M0 6h12" c="#44546a" w={1.200} />,
};

const Icon = ({ name, className = "size-[13px]" }: { name: string; className?: string }) => (
  <svg viewBox="0 0 12 12" className={clsx("block shrink-0 overflow-visible", className)} aria-hidden="true">
    {icons[name]}
  </svg>
);

const Tool = ({ name, active }: { name: string; active?: boolean }) => (
  <button
    aria-label={name}
    className={clsx("flex size-4 items-center justify-center", active && "bg-[#ffe28a] outline outline-[#e9c863]")}
  >
    <Icon name={name} />
  </button>
);

type Group = { label: string; width: string; tools: string[]; active?: string };

const rowOne: Group[] = [
  {
    label: "Attributes/Visibility",
    width: "w-[168px]",
    tools: ["attributes", "layers", "eyelink", "eyeunlink", "eyelights", "eyerefresh", "eyetoggle", "eyeplus", "eyeminus"],
    active: "eyelights",
  },
  {
    label: "Graphics",
    width: "w-[219px]",
    tools: ["refresh", "cylwire", "cylplain", "cyldash", "cylflat", "cylblue", "cylcyan", "cylgrey", "cylhatch", "cylgreen", "cylbox", "shade"],
    active: "cylblue",
  },
  {
    label: "Graphics (advanced)",
    width: "w-[185px]",
    tools: ["cubelink", "cubelights", "cuberefresh", "cubetoggle", "cylnavy", "cyldark", "boxgreen", "boxcyan", "cylpale", "shield"],
  },
  { label: "Undo/Redo", width: "w-[63px]", tools: ["undo", "redo", "history"] },
  { label: "Views", width: "w-[115px]", tools: ["zoomcube", "zoombox", "fit", "line", "rotate", "graduate"] },
  { label: "Workplanes", width: "w-[63px]", tools: ["axes", "axesnew", "axesmove"] },
  { label: "System", width: "w-[116px]", tools: ["colors", "page", "globe", "dialog", "snap", "plane"] },
  {
    label: "Circles/Arcs",
    width: "w-[202px]",
    tools: ["arcpencil", "circle1", "circle2", "circle3", "circle4", "circle5", "circle6", "arc", "circle7", "circle8", "circle9"],
  },
  { label: "Study", width: "w-[64px]", tools: ["study1", "study2", "study3"] },
];

const rowTwo: Group[] = [
  {
    label: "Edit Elements",
    width: "w-[289px]",
    tools: ["trash", "editcut", "stack", "mirror", "moveline", "spin", "cut", "trim", "between", "offset", "drop", "swap", "lift", "twist", "bend", "paste"],
  },
  {
    label: "Segments/Lines",
    width: "w-[202px]",
    tools: ["segpencil", "segplus", "segtan", "segtri", "segangle", "segu", "segfillet", "segcross", "segplay", "seggreen", "segbox"],
  },
  { label: "Query", width: "w-[81px]", tools: ["question", "queryaxis", "queryred", "querysolid"] },
  {
    label: "Modelling",
    width: "w-[116px]",
    tools: ["solid1", "solid2", "solid3", "solid4", "solid5", "dynamic"],
    active: "dynamic",
  },
  { label: "Offset", width: "w-[97px]", tools: ["off1", "off2", "off3", "off4", "off5"] },
  {
    label: "Flow",
    width: "w-[168px]",
    tools: ["rainbow", "paint", "cubegrey", "blade", "nodes", "cubepurple", "rainbow", "redball", "rainbow"],
  },
  {
    label: "Profiles",
    width: "w-[220px]",
    tools: ["profok", "prof1", "prof2", "rect", "ellipse", "crescent", "polygon", "profarrow", "proffill", "profhand", "profgrid", "profunion"],
  },
];

const menus = [
  "File", "Edit", "Wireframe", "Reverse", "Mesh", "Solid", "Operation", "Modelling", "Analysis", "Electrode", "Annotation",
  "Plotview", "System", "Window", "Machining", "Mould", "Progress", "Standard elements", "Flow", "?",
];

const tabs = ["Standard", "Edit", "Wireframe", "Modelling", "Surfaces", "Dimensions", "Applications", "Mould", "Progress", "CAM", "Flow"];

const dock = [
  "camera", "segd", "fitview", "arcd", "zoomd", "profd", "axesd", "curved", "attrd", "surfd", "refreshd", "cubed",
  "questiond", "dimd", "trashd", "undod", "cam", "image",
];

function RibbonRow({ groups }: { groups: Group[] }) {
  return (
    <div className="flex h-[30px]">
      {groups.map((g) => (
        <div
          key={g.label}
          className={clsx("flex shrink-0 flex-col border-l border-dotted border-[#a5a5b0] pl-[3px] pr-[9px]", g.width)}
        >
          <div className="grid auto-cols-fr grid-flow-col justify-items-center">
            {g.tools.map((t, i) => (
              <Tool key={i} name={t} active={g.active === t} />
            ))}
          </div>
          <span className="whitespace-nowrap text-center leading-[14px] text-[#3c3c46]">{g.label}</span>
        </div>
      ))}
    </div>
  );
}

function TitleBar() {
  return (
    <header className="flex h-[15px] items-center bg-white">
      <span className="ml-px flex size-3 items-center justify-center bg-[#6cb52d] font-bold text-white">Vi</span>
      <div className="ml-[5px] flex items-center">
        {["new", "open", "recent", "save", "saveall", "export", "print", "preview", "undo", "redo", "history"].map((n) => (
          <Tool key={n} name={n} />
        ))}
        <button aria-label="customize" className="flex h-4 w-3 items-center justify-center">
          <svg viewBox="0 0 6 6" className="size-[6px]">
            <path d="M1 .5h4M1 3h4L3 5.500z" fill="#222" stroke="#222" strokeWidth=".6" />
          </svg>
        </button>
      </div>
      <span className="h-2 w-px bg-[#bbb]" />
      <h1 className="flex-1 pt-[2px] text-center">VISI 2020.0 - Surface Examples.wkf - [Dynamic]</h1>
      <div className="flex pr-px">
        {["M3 6h6", "M3 4h4v5H3zM4.500 4V2.500h5v5H7", "M2.500 2.500l7 7M9.500 2.500l-7 7"].map((d) => (
          <button key={d} aria-label="window" className="flex w-[30px] justify-center">
            <svg viewBox="0 0 12 12" className="size-3">
              <path d={d} stroke="#222" fill="none" />
            </svg>
          </button>
        ))}
      </div>
    </header>
  );
}

function MenuBar() {
  return (
    <nav className="flex h-[13px] items-end justify-between bg-[#f1f0f4] pl-[5px]">
      <div className="flex gap-[9px]">
        {menus.map((m) => (
          <button key={m} className="whitespace-nowrap">
            {m}
          </button>
        ))}
      </div>
      <div className="flex">
        {["M3 9h6", "M3 4h4v5H3zM4.500 4V2.500h5v5H7", "M3 3l6 6M9 3L3 9"].map((d) => (
          <button key={d} aria-label="document window">
            <svg viewBox="0 0 12 12" className="size-3">
              <path d={d} stroke="#999" fill="none" />
            </svg>
          </button>
        ))}
      </div>
    </nav>
  );
}

function Ribbon() {
  return (
    <div className="bg-[#475a85] pl-[6px]">
      <div className="h-[75px] bg-[#eeeef3] pl-[3px]">
        <div className="flex h-[15px] text-[#33506b]">
          <button aria-label="more tabs" className="flex w-[11px] items-center justify-center border-r border-[#9db4c0] text-black">
            <svg viewBox="0 0 6 4" className="h-[3px] w-[5px]">
              <path d="M0 0h6L3 4z" fill="#222" />
            </svg>
          </button>
          {tabs.map((t, i) => (
            <button
              key={t}
              className={clsx(
                "border-r border-t border-r-[#9db4c0] border-t-[#c8d6de]",
                i === 0 ? "bg-[#a9cdec] px-[2px] font-bold text-[#1d3450]" : "bg-[#edf2f7] pl-[3px] pr-[3px]"
              )}
            >
              {t}
            </button>
          ))}
        </div>
        <div className="flex flex-col gap-px pt-px">
          <RibbonRow groups={rowOne} />
          <RibbonRow groups={rowTwo} />
        </div>
      </div>
    </div>
  );
}

function Dock() {
  return (
    <aside className="w-[82px] shrink-0 border-t-[5px] border-[#475a85] bg-[#eeeef3]">
      <div className="mt-1 border-t border-dotted border-[#b5b5c0]" />
      <div className="ml-1 mt-1 grid h-[156px] w-[34px] grid-cols-2 items-center">
        {dock.map((d) => (
          <Tool key={d} name={d} />
        ))}
      </div>
    </aside>
  );
}

const ViewButton = ({ name, active }: { name: string; active?: boolean }) => (
  <button
    aria-label={name}
    className={clsx(
      "flex size-4 items-center justify-center border",
      active ? "border-[#d8b85a] bg-[#c9a94f]" : "border-[#8a8a8a] bg-[#a3a3a3]"
    )}
  >
    <Icon name={name} />
  </button>
);

function Model() {
  return (
    <svg viewBox="82 103 1198 565" className="absolute inset-0 size-full" aria-label="surface model">
      <defs>
        <filter id="soft" x="-20%" y="-20%" width="140%" height="140%">
          <feGaussianBlur stdDeviation="3" />
        </filter>
        <filter id="tight" x="-20%" y="-20%" width="140%" height="140%">
          <feGaussianBlur stdDeviation="2" />
        </filter>
        <clipPath id="sheet">
          <path d="M467 367L742 266Q757 260 762 269C764 277 765 292 771 301C780 315 797 323 812 334C838 352 854 377 857 419Q853 415 843 416L606 501Q590 506 588 519L592 549C570 539 541 523 527 505C513 487 513 460 500 442C490 430 475 421 460 411L457 384Q455 372 467 367Z" />
        </clipPath>
      </defs>
      <g clipPath="url(#sheet)">
        <rect x="450" y="250" width="420" height="310" fill="#f200f2" />
        <path
          d="M457 381C485 387 502 405 508 425C514 452 520 478 545 493C560 502 574 508 588 518"
          fill="none"
          stroke="#ff0aff"
          strokeWidth="16"
          filter="url(#soft)"
        />
        <path
          d="M450 383C478 388 497 402 506 424C513 450 516 474 539 490C556 502 572 509 590 520L596 560L440 560Z"
          fill="#b400b4"
          filter="url(#soft)"
        />
        <path
          d="M450 389C478 396 494 409 503 431C510 457 513 482 534 498C550 509 570 519 590 528L596 560L440 560Z"
          fill="#b800b8"
        />
        <path
          d="M764 264C766 277 767 292 773 301C782 315 799 323 814 334C840 352 856 377 859 419"
          fill="none"
          stroke="#8a008a"
          strokeWidth="8"
          filter="url(#tight)"
        />
        <path d="M769 280C768 295 774 303 783 312M830 346C850 366 858 392 860 420" fill="none" stroke="#300030" strokeWidth="5" filter="url(#tight)" />
      </g>
      <path
        d="M763 270C765 279 766 292 772 301C781 315 798 323 812 334C838 352 854 377 857 419"
        fill="none"
        stroke="#4a0a4a"
        strokeWidth=".8"
      />
      <path d="M856 417L858.500 421 862 454Q860 436 856 417Z" fill="#b400b4" stroke="#b400b4" strokeWidth=".8" />
      <path d="M652.500 463v17M644 471.500h17" stroke="#e0c0e0" strokeWidth="2.500" />
      <path d="M652.500 463v17M644 471.500h17" stroke="#333" />
    </svg>
  );
}

function Triad() {
  return (
    <svg viewBox="0 0 44 68" className="absolute bottom-[3px] left-[29px] h-[68px] w-[44px] overflow-visible text-[8px]" aria-label="axes">
      <path d="M9 18l16-7v13l-16 10z" fill="#dcd65e" stroke="#b5ad3c" strokeWidth=".6" />
      <path d="M10 32l18-6 6 8-17 5z" fill="#999" stroke="#444" strokeWidth=".7" />
      <path d="M9 19l7 10 1 9-8-7z" fill="#6c8a5c" stroke="#444" strokeWidth=".6" />
      <path d="M10 31L8 13" stroke="#18a018" strokeWidth="2" />
      <path d="M5 14l2-7 5 6z" fill="#12b512" />
      <path d="M10 31l16-6" stroke="#c01818" strokeWidth="2" />
      <path d="M24 22l9 1-7 6z" fill="#b01010" />
      <path d="M10 31l17 21" stroke="#18d8e0" strokeWidth="2.500" />
      <path d="M24 53l6-4 2 8z" fill="#18d8e0" />
      <circle cx="10" cy="31" r="2" fill="#555" />
      <text x="3" y="7" fill="#555">Y</text>
      <text x="33" y="26" fill="#c33">X</text>
      <text x="30" y="63" fill="#444">Z</text>
    </svg>
  );
}

const steps = [
  { label: "accept", d: "M9.500 16.500l4 4.500 9-9" },
  { label: "cancel", d: "M11 11l10 10M21 11L11 21", red: true },
  { label: "previous", d: "M18.500 9.500L12.500 16l6 6.500" },
  { label: "next", d: "M13.500 9.500l6 6.500-6 6.500" },
];

const Glyph = ({ children, label }: { children: ReactNode; label: string }) => (
  <button aria-label={label} className="flex h-[18px] items-center justify-center">
    <svg viewBox="0 0 14 14" className="size-[14px]" fill="#fff">
      {children}
    </svg>
  </button>
);

function Recorder() {
  return (
    <div className="absolute right-[3px] top-[351px] flex w-4 flex-col rounded-xs bg-[#1c1c1e] text-white">
      <div className="flex h-[10px] items-center justify-center gap-px">
        <svg viewBox="0 0 12 6" className="h-[6px] w-3">
          <path d="M1 5l1-3 3-1-1 3z" stroke="#ddd" fill="none" />
          <path d="M7 3h1M9 3h1M11 3h1" stroke="#ddd" />
        </svg>
      </div>
      <Glyph label="screenshot">
        <path d="M1 4h3l1-2h4l1 2h3v8H1z" />
        <circle cx="7" cy="7.500" r="2.500" fill="none" stroke="#222" />
      </Glyph>
      <Glyph label="record">
        <circle cx="7" cy="7" r="6" fill="#222" stroke="#ddd" />
        <circle cx="7" cy="7" r="4.300" fill="#fff2f2" />
      </Glyph>
      <span className="text-center font-[Roboto] text-[6px] leading-[6px] text-[#ddd]">04:34</span>
      <Glyph label="microphone">
        <rect x="4" y="0" width="6" height="8.500" rx="3" fill="#3fdc2c" />
        <path d="M2.500 6c0 6 9 6 9 0M7 10v3M4 13.500h6" stroke="#3fdc2c" fill="none" />
      </Glyph>
      <Glyph label="speaker">
        <path d="M0 5h3l4-3v10L3 9H0z" />
        <path d="M9 4c2 2 2 4 0 6M11 3c3 2 3 6 0 8" stroke="#ccc" fill="none" />
      </Glyph>
      <Glyph label="webcam">
        <circle cx="7" cy="6" r="5" fill="none" stroke="#888" strokeWidth="1.500" />
        <circle cx="7" cy="6" r="2" fill="none" stroke="#aaa" />
        <path d="M3 12h6" stroke="#888" />
        <path d="M9 8h4v4H9z" fill="#e55" />
      </Glyph>
      <hr className="border-[#aaa]" />
      <div className="h-1" />
      <Glyph label="windows">
        <path d="M1 1h10v9H1z" fill="#ccc" />
        <path d="M3 3h11v10H3z" stroke="#222" strokeWidth=".7" />
      </Glyph>
      <Glyph label="settings">
        <path d="M6 0h2l.5 2 1.500.7 2-1 1.400 1.500-1.200 1.800.5 1.300 1.800.5v2l-2 .5-.5 1.200 1 1.800-1.500 1.500-1.800-1-1.300.5L8 14H6l-.5-2-1.400-.6-1.900 1L.8 11l1-1.900-.6-1.300L0 7.300V5.800l1.500-.5.5-1.300-1-1.800L2.500.8l1.800 1.100L5.500 1.500z" />
        <circle cx="7" cy="7" r="2.500" fill="#1c1c1e" />
      </Glyph>
    </div>
  );
}

function Viewport() {
  const top = ["menu", "fitgrey", "snapshot", "axisred", "viewtop", "viewfront", "viewleft", "viewright", "viewback", "viewbottom", "viewiso"];
  const side = ["cylwire", "cylplain", "cylblue", "cylgrey", "cylhatch"];
  return (
    <main className="relative flex-1 bg-linear-to-b from-[#303030] to-[#bebebe]">
      <Model />
      <Triad />
      <div className="absolute left-[2px] top-[2px] flex w-[203px] justify-between">
        {top.map((n) => (
          <ViewButton key={n} name={n} />
        ))}
      </div>
      <div className="absolute left-[2px] top-[21px] flex h-[91px] flex-col justify-between">
        {side.map((n) => (
          <ViewButton key={n} name={n} active={n === "cylblue"} />
        ))}
      </div>
      <div className="relative mx-auto mt-[3px] flex w-[148px] justify-between">
        {steps.map((s) => (
          <button key={s.label} aria-label={s.label}>
            <svg viewBox="0 0 32 32" className="size-8" fill="none">
              {s.red ? (
                <>
                  <circle cx="16" cy="16" r="15.200" stroke="#b3262b" strokeWidth="1.200" />
                  <circle cx="16" cy="16" r="12.700" stroke="#b3262b" strokeWidth="1.200" />
                </>
              ) : (
                <circle cx="16" cy="16" r="15" stroke="#c9c9c9" strokeWidth="2" />
              )}
              <path d={s.d} stroke={s.red ? "#d2262b" : "#c9c9c9"} strokeWidth="2" />
            </svg>
          </button>
        ))}
      </div>
      <Recorder />
    </main>
  );
}

const Sep = () => <span className="h-[10px] w-px shrink-0 bg-[#b5b5bd]" />;

function StatusBars() {
  return (
    <footer className="whitespace-nowrap bg-[#eeeef3]">
      <div className="flex h-[13px] items-center justify-end border-b border-[#c4c4cc] pr-2 leading-[14px]">
        <label className="mr-[9px] flex items-center border-l border-dotted border-[#999] pl-[2px]">
          <input aria-label="command search" className="h-[10px] w-[74px] bg-white" />
          <svg viewBox="0 0 8 8" className="size-2">
            <path d="M1 7l2-2" stroke="#446" />
            <circle cx="5" cy="3" r="2.200" stroke="#57a" fill="#fff" />
          </svg>
        </label>
        <span className="w-[66px] overflow-hidden pt-px">Absolute XZ Front</span>
        <Sep />
        <span className="ml-1 w-[41px] pt-px">View ABS</span>
        <Sep />
        <strong className="ml-1 w-[39px] pt-px">EXAMPLI</strong>
        <Sep />
        <span className="w-[17px]" />
        {[0, 1, 2].map((i) => (
          <span key={i} className="flex w-[29px] items-center gap-[2px]">
            <Sep />
            <span className="h-2 w-[22px] bg-[#bfbfc3]" />
          </span>
        ))}
        <svg viewBox="0 0 12 12" className="ml-1 size-[10px]">
          <circle cx="6" cy="6" r="5.500" fill="#173a6b" />
          <path d="M2 4l4-2 2 3-4 4z" fill="#2f9c5a" />
        </svg>
      </div>
      <div className="flex h-3 items-center justify-end bg-[#f3f3f6] pr-3 font-[Roboto,sans-serif]">
        <Sep />
        <button className="w-[44px]">Toggle</button>
        {["plug", "wrench", "attach", "question", "filter", "cubepink", "ladder", "gyro", "grid"].map((n) => (
          <span key={n} className="flex w-[21px] items-center justify-between">
            <Sep />
            <button aria-label={n} className={clsx("mx-auto p-px", n === "cubepink" && "bg-[#ffe28a]")}>
              <Icon name={n} className="size-[10px]" />
            </button>
          </span>
        ))}
        <span className="ml-[3px] w-[67px]">LS: 1.00 PS: 1.00</span>
        <Sep />
        <span className="ml-1 w-[43px]">Units: MM</span>
        <Sep />
        <span className="ml-1">
          X = 0834.219 <span className="text-[#e8222a]">Y =-0074.744</span> Z = 0000.000
        </span>
      </div>
    </footer>
  );
}

const tray = [
  { label: "show hidden icons", d: "M3 9l4-4 4 4" },
  { label: "meet now", d: "M3 4h8v7H3zM5 2h4M5 13h4M6 6.500h2v2H6z" },
  { label: "microphone in use", d: "M6 2h2v6H6zM4 7c0 4 6 4 6 0M7 10v3" },
  { label: "recorder", d: "M2 3h10v9H2zM5 5h4v4H5z" },
  { label: "battery", d: "M6 5h7v5H5M2 3v3h3V3M3.500 6v3" },
  { label: "wifi", d: "M2 11C3 6 7 3 12 3M5 12c0-3 3-6 7-6M8 12c0-2 2-3 4-3" },
  { label: "volume", d: "M2 6h2l3-3v8L4 9H2zM9 5c1 1 1 3 0 4M11 3c2 2 2 6 0 8" },
];

function Taskbar() {
  return (
    <div className="flex h-[27px] items-center bg-linear-to-r from-[#20262c] via-[#303338] to-[#1e2330] font-[Roboto,sans-serif] text-[10px] text-white">
      <button aria-label="Start" className="flex w-8 justify-center">
        <svg viewBox="0 0 12 12" className="size-[11px]" fill="#fff">
          <path d="M0 1.500L5.500.8v4.900H0zM6.200.7L12 0v5.700H6.200zM0 6.300h5.500v5L0 10.500zM6.200 6.300H12V12l-5.800-.7z" />
        </svg>
      </button>
      <label className="flex h-full w-[229px] items-center bg-[#f3f3f3] pl-2">
        <svg viewBox="0 0 12 12" className="mr-2 size-[11px]" fill="none" stroke="#222">
          <circle cx="7.500" cy="4.500" r="3.800" />
          <path d="M4.500 7.500L.5 11.500" strokeWidth="1.300" />
        </svg>
        <input aria-label="Search" placeholder="Type here to search" className="w-[140px] flex-1 text-[#333] placeholder-[#444]" />
        <svg viewBox="0 0 42 24" className="mr-[6px] h-6 w-[42px]">
          <ellipse cx="18" cy="13" rx="18" ry="9" fill="#d99a5b" />
          <ellipse cx="18" cy="12" rx="17.500" ry="8" fill="#ecb77c" />
          <circle cx="20" cy="16" r="2.500" fill="#f3f3f3" />
          <ellipse cx="7" cy="12" rx="3" ry="2" fill="#e9c62e" />
          <ellipse cx="14" cy="7" rx="3" ry="1.800" fill="#d8402c" />
          <ellipse cx="23" cy="6.500" rx="3" ry="1.800" fill="#3aa54a" />
          <ellipse cx="30" cy="11" rx="3" ry="2" fill="#2f7ed0" />
          <ellipse cx="26" cy="17" rx="3" ry="1.800" fill="#a04ac0" />
          <path d="M6 23L34 5" stroke="#7b3a1c" strokeWidth="2" />
          <path d="M33 3l8-2-5 7z" fill="#b5652c" />
        </svg>
      </label>
      <button aria-label="Task view" className="flex w-8 justify-center">
        <svg viewBox="0 0 12 12" className="size-[11px]" fill="none" stroke="#ddd">
          <path d="M1 1v2h6V1M1 11V9h6v2M1 4.500h6v3H1zM10 1v10M9 4h2" />
        </svg>
      </button>
      <button aria-label="File Explorer" className="ml-1 flex h-full w-7 items-center justify-center border-b-2 border-[#6aa9dc]">
        <svg viewBox="0 0 15 12" className="h-3 w-[15px]">
          <path d="M0 0h6l1 2h8v10H0z" fill="#e9b73a" />
          <path d="M0 3h15v9H0z" fill="#f9d978" />
          <path d="M3 7h9v5h-2V9H5v3H3z" fill="#3b8fd0" />
        </svg>
      </button>
      <button aria-label="VISI" className="ml-[3px] flex h-full w-8 items-center justify-center border-b-2 border-[#6aa9dc] bg-[#4c5358]">
        <span className="flex size-4 items-center justify-center bg-[#6cb52d] font-bold">Vi</span>
      </button>
      <button aria-label="Presenter" className="ml-[2px] flex h-full w-7 items-center justify-center border-b-2 border-[#6aa9dc]">
        <span className="flex size-4 items-center justify-center bg-[#fbe9d8] text-[13px] font-bold text-[#b06a28]">P</span>
      </button>
      <div className="ml-auto flex items-center">
        <button className="flex items-center gap-[7px] whitespace-nowrap">
          <svg viewBox="0 0 13 12" className="h-3 w-[13px]">
            <rect width="13" height="12" rx="2.500" fill="#5b6fe0" />
            <path d="M5 3l4 3-4 3z" fill="#fff" />
          </svg>
          The Muppet Show of...
        </button>
        <div className="ml-[7px] flex gap-[2px]">
          {tray.map((t) => (
            <button key={t.label} aria-label={t.label}>
              <svg viewBox="0 0 14 14" className="size-[14px]" fill="none" stroke="#e4e4e4">
                <path d={t.d} />
                {t.label === "recorder" && <circle cx="11" cy="11" r="2.500" fill="#e33" stroke="none" />}
              </svg>
            </button>
          ))}
        </div>
        <button className="ml-px flex w-[46px] flex-col items-center whitespace-nowrap text-[8px] leading-3">
          <span>12:11 PM</span>
          <span>2/3/2026</span>
        </button>
        <button aria-label="Notifications" className="ml-[6px] mr-[15px]">
          <svg viewBox="0 0 12 12" className="size-3">
            <path d="M0 0h12v9H9v3L6 9H0z" fill="#fff" />
            <path d="M2 2.500h8M2 4.500h8M2 6.500h5" stroke="#333" strokeWidth=".8" />
          </svg>
        </button>
      </div>
    </div>
  );
}

export default function App() {
  return (
    <div className="flex min-h-screen flex-col overflow-hidden bg-[#eeeef3] font-['DejaVu_Sans_Condensed','Noto_Sans',sans-serif] text-[8px] leading-3 text-[#1a1a1a]">
      <TitleBar />
      <MenuBar />
      <Ribbon />
      <div className="flex flex-1">
        <Dock />
        <Viewport />
      </div>
      <StatusBars />
      <Taskbar />
    </div>
  );
}
